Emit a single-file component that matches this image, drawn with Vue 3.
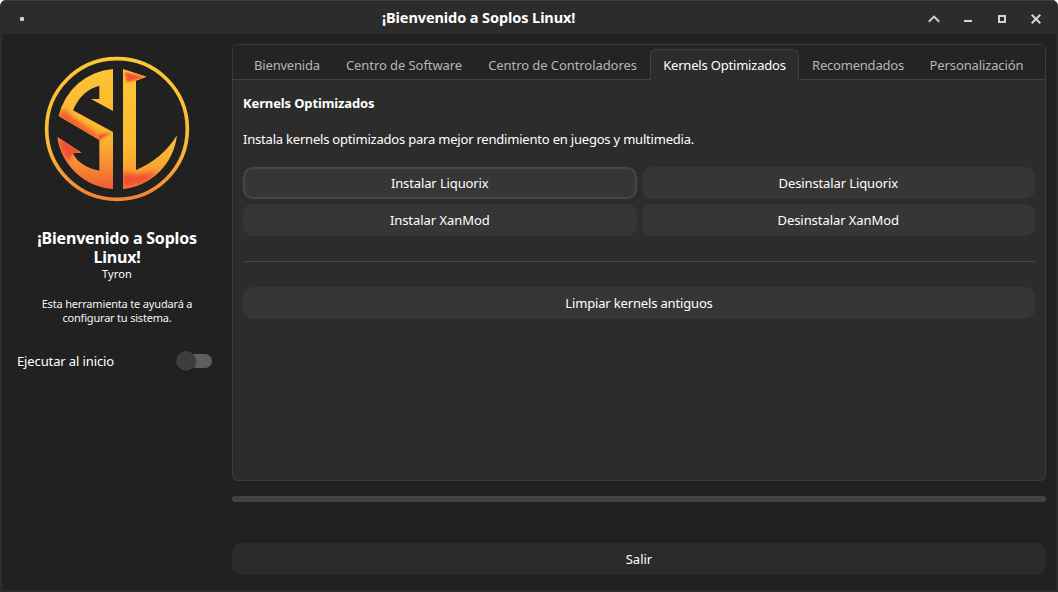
<script setup>
import { ref } from 'vue'

const tabs = [
  { label: 'Bienvenida', cls: 't1' },
  { label: 'Centro de Software', cls: 't2' },
  { label: 'Centro de Controladores', cls: 't3' },
  { label: 'Kernels Optimizados', cls: 't4' },
  { label: 'Recomendados', cls: 't5' },
  { label: 'Personalización', cls: 't6' },
]
const active = ref(3)
</script>

<template>
  <div class="window">
    <header class="titlebar">
      <span class="dot"></span>
      <h1 class="title">¡Bienvenido a Soplos Linux!</h1>
      <svg class="controls" width="124" height="20" viewBox="0 0 124 20" fill="none" stroke="#d2d2d2" stroke-width="2">
        <path d="M8.8 12.8 14 7.6l5.2 5.2" />
        <path d="M44 12h8" />
        <rect x="79" y="7" width="6" height="6" />
        <path d="m111.7 5.7 8.6 8.6m0-8.6-8.6 8.6" />
      </svg>
    </header>
    <div class="body">
      <aside class="sidebar">
        <svg class="logo" width="162" height="162" viewBox="0 0 486 486">
          <defs>
            <linearGradient id="ring" x1="0" y1="27" x2="0" y2="459" gradientUnits="userSpaceOnUse">
              <stop offset="0" stop-color="#fdc733" />
              <stop offset=".6" stop-color="#fcbb32" />
              <stop offset="1" stop-color="#f58232" />
            </linearGradient>
            <linearGradient id="ess" x1="0" y1="63" x2="0" y2="423" gradientUnits="userSpaceOnUse">
              <stop offset="0" stop-color="#fcc433" />
              <stop offset=".58" stop-color="#fbb630" />
              <stop offset=".8" stop-color="#f68c33" />
              <stop offset="1" stop-color="#f25b33" />
            </linearGradient>
            <clipPath id="sc">
              <path d="M231 63A181 181 0 0 0 68 204L190 276V368Q133 358 110 316L137 314L64 267A181 181 0 0 0 231 423V252L111 187Q136 127 190 113V153H165L231 189Z" />
            </clipPath>
            <clipPath id="lc">
              <path d="M261 63L332 86L300 98V366Q379 333 423 262A182 182 0 0 1 261 423Z" />
            </clipPath>
            <filter id="soft" x="-50%" y="-50%" width="200%" height="200%">
              <feGaussianBlur stdDeviation="8" />
            </filter>
            <filter id="edge" x="-50%" y="-50%" width="200%" height="200%">
              <feGaussianBlur stdDeviation="3" />
            </filter>
          </defs>
          <circle cx="243" cy="243" r="211" fill="none" stroke="url(#ring)" stroke-width="11" />
          <g clip-path="url(#sc)">
            <rect x="50" y="50" width="190" height="390" fill="url(#ess)" />
            <path d="M60 206L86 182L110 208L185 258L190 282Z" fill="#f15a32" filter="url(#soft)" />
            <path d="M185 278L190 258L226 255Z" fill="#f04f35" filter="url(#edge)" />
            <path d="M58 260L138 314L108 316L98 345L74 318Z" fill="#f15a34" filter="url(#soft)" />
            <path d="M72 274L135 313L105 318L100 335Z" fill="#f04d35" filter="url(#edge)" />
          </g>
          <g clip-path="url(#lc)">
            <rect x="255" y="55" width="175" height="375" fill="url(#ring)" />
            <path d="M266 72L328 86L298 97L272 103Z" fill="#f25534" filter="url(#edge)" />
            <path d="M258 372L298 380L366 370L330 405L258 422Z" fill="#f04f33" filter="url(#soft)" />
          </g>
        </svg>
        <h2 class="welcome"><span>¡Bienvenido a Soplos</span><span>Linux!</span></h2>
        <p class="user">Tyron</p>
        <p class="hint"><span>Esta herramienta te ayudará a</span><span class="h2">configurar tu sistema.</span></p>
        <div class="startup">
          <span class="startlabel">Ejecutar al inicio</span>
          <span class="switch"><i class="knob"></i></span>
        </div>
      </aside>
      <main class="main">
        <section class="notebook">
          <nav class="tabs">
            <div v-for="(t, i) in tabs" :key="t.label" class="tab" :class="[t.cls, { active: i === active }]" @click="active = i">
              <span>{{ t.label }}</span>
            </div>
          </nav>
          <div class="page">
            <h3 class="heading">Kernels Optimizados</h3>
            <p class="desc">Instala kernels optimizados para mejor rendimiento en juegos y multimedia.</p>
            <div class="grid">
              <button class="btn focus"><span>Instalar Liquorix</span></button>
              <button class="btn"><span>Desinstalar Liquorix</span></button>
              <button class="btn b3"><span>Instalar XanMod</span></button>
              <button class="btn b3"><span>Desinstalar XanMod</span></button>
            </div>
            <div class="sep"></div>
            <button class="btn b5"><span>Limpiar kernels antiguos</span></button>
          </div>
        </section>
        <div class="progress"></div>
        <button class="btn exit"><span>Salir</span></button>
      </main>
    </div>
  </div>
</template>

<style>
body { background: #fff; margin: 0; }
</style>

<style scoped>
* { box-sizing: border-box; }
.window {
  width: 1058px; height: 592px; overflow: hidden;
  display: flex; flex-direction: column;
  background: #2c2c2c; border-radius: 6px 6px 0 0;
  font-family: "Noto Sans", sans-serif; font-size: 13px; line-height: 18px; color: #fff;
}
h1, h2, h3, p { margin: 0; font-weight: 400; white-space: nowrap; }
.titlebar { height: 34px; flex: none; display: flex; align-items: center; border-top: 1px solid #404040; padding: 0 14px 0 20px; }
.dot { width: 4px; height: 4px; border-radius: 1px; background: #cfcfcf; margin-top: 2px; }
.title { margin: 0 0 2px 358px; font-size: 14.5px; font-weight: 700; letter-spacing: -.09px; }
.controls { margin-left: auto; margin-top: 3px; }
.body { flex: 1; display: flex; margin: 0 2px 2px; background: #212121; }
.sidebar { width: 230px; display: flex; flex-direction: column; align-items: center; padding-top: 14px; text-align: center; }
.logo { display: block; }
.welcome { margin-top: 19px; font-size: 16px; font-weight: 700; line-height: 19px; letter-spacing: -.2px; display: flex; flex-direction: column; }
.user { font-size: 11px; line-height: 14px; letter-spacing: .1px; }
.hint { font-size: 11px; line-height: 14px; margin-top: 16px; color: #f4f4f4; letter-spacing: -.17px; display: flex; flex-direction: column; }
.h2 { letter-spacing: -.2px; }
.startup { align-self: stretch; display: flex; align-items: center; justify-content: space-between; margin-top: 26px; padding: 0 20px 0 15px; height: 20px; }
.startlabel { letter-spacing: -.12px; }
.switch { width: 34px; height: 14px; border-radius: 7px; background: #5f5f5f; display: flex; align-items: center; }
.knob { width: 20px; height: 20px; flex: none; margin-left: -2px; border-radius: 50%; background: #3d3d3d; box-shadow: 0 1px 2px rgba(0, 0, 0, .4); }
.main { width: 814px; display: flex; flex-direction: column; padding-top: 10px; }
.notebook { height: 437px; border: 1px solid #3b3b3b; border-radius: 6px; background: #2c2c2c; display: flex; flex-direction: column; overflow: hidden; }
.tabs { height: 35px; flex: none; display: grid; grid-template-columns: 92px 142px 175px 149px 118px 119px; padding: 4px 0 0 8px; background: #242424; box-shadow: inset 0 -1px #404040; }
.tab { display: flex; align-items: center; justify-content: center; color: #b6b6b6; white-space: nowrap; }
.tab.active { color: #fff; background: #2c2c2c; border: 1px solid #404040; border-bottom: 0; border-radius: 6px 6px 0 0; }
.t1 { letter-spacing: -.2px; }
.t2, .t3 { letter-spacing: -.07px; }
.t4 { letter-spacing: -.19px; }
.t5 { letter-spacing: -.22px; }
.t6 { letter-spacing: -.12px; }
.page { padding: 14px 10px 0; display: flex; flex-direction: column; }
.heading { font-size: 13px; font-weight: 700; letter-spacing: -.13px; }
.desc { margin-top: 18px; letter-spacing: -.205px; }
.grid { display: grid; grid-template-columns: 1fr 1fr; gap: 5px; margin-top: 19px; }
.btn { height: 32px; border: 0; border-radius: 10px; padding: 0; margin: 0; background: #363636; color: #fff; font: inherit; letter-spacing: -.12px; display: flex; align-items: center; justify-content: center; }
.btn.b3 { letter-spacing: -.06px; }
.btn.b5 { letter-spacing: -.16px; }
.btn.focus { box-shadow: inset 0 0 0 2px #474747; }
.sep { height: 1px; background: #464646; margin: 25px 0; }
.progress { height: 6px; border-radius: 3px; background: #424242; margin-top: 15px; }
.btn.exit { margin-top: 41px; background: #2b2b2b; letter-spacing: 0; }
</style>
